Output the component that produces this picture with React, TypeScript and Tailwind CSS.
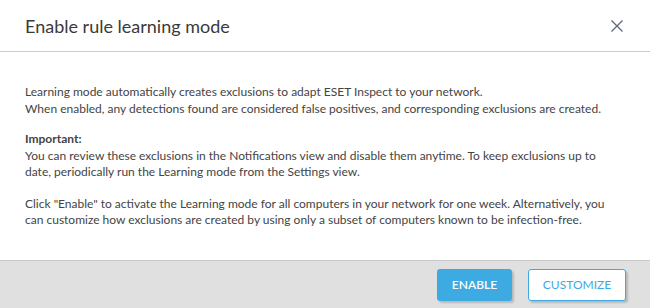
export default function App() {
  return (
    <div className="w-[650px] h-[308px] bg-white flex flex-col font-['Lato','Liberation_Sans',sans-serif]">
      <div className="h-[52px] border-b border-[#cccccc] flex items-center justify-between pl-[25px] pr-[26px] shrink-0">
        <h1 className="text-[18px] text-[#3a3a3a] font-normal leading-none">Enable rule learning mode</h1>
        <button className="w-[14px] h-[14px] flex items-center justify-center text-[#5c6778]">
          <svg width="12" height="12" viewBox="0 0 12 12" fill="none" stroke="currentColor" strokeWidth="1.3">
            <path d="M0.5 0.5 L11.5 11.5 M11.5 0.5 L0.5 11.5" />
          </svg>
        </button>
      </div>

      <div className="flex-1 px-[25px] pt-[32px] text-[12px] leading-[16.5px] text-[#444444] whitespace-nowrap">
        <p>
          Learning mode automatically creates exclusions to adapt ESET Inspect to your network.
          <br />
          When enabled, any detections found are considered false positives, and corresponding exclusions are created.
        </p>
        <p className="mt-[14px]">
          <span className="font-bold">Important:</span>
          <br />
          You can review these exclusions in the Notifications view and disable them anytime. To keep exclusions up to
          <br />
          date, periodically run the Learning mode from the Settings view.
        </p>
        <p className="mt-[15px]">
          Click "Enable" to activate the Learning mode for all computers in your network for one week. Alternatively, you
          <br />
          can customize how exclusions are created by using only a subset of computers known to be infection-free.
        </p>
      </div>

      <div className="h-[48px] shrink-0 border-t border-[#c8c8c8] bg-[#e0e0e0] flex items-start justify-end gap-4 pt-[8px] pr-[24px]">
        <button className="w-[75px] h-[32px] rounded-[3px] bg-[#3eaae2] text-white text-[12px] font-semibold shadow-[2px_2px_2px_rgba(0,0,0,0.18)]">
          ENABLE
        </button>
        <button className="w-[98px] h-[32px] rounded-[3px] bg-white border border-[#3eaae2] text-[#3eaae2] text-[12px] shadow-[2px_2px_2px_rgba(0,0,0,0.18)]">
          CUSTOMIZE
        </button>
      </div>
    </div>
  );
}
